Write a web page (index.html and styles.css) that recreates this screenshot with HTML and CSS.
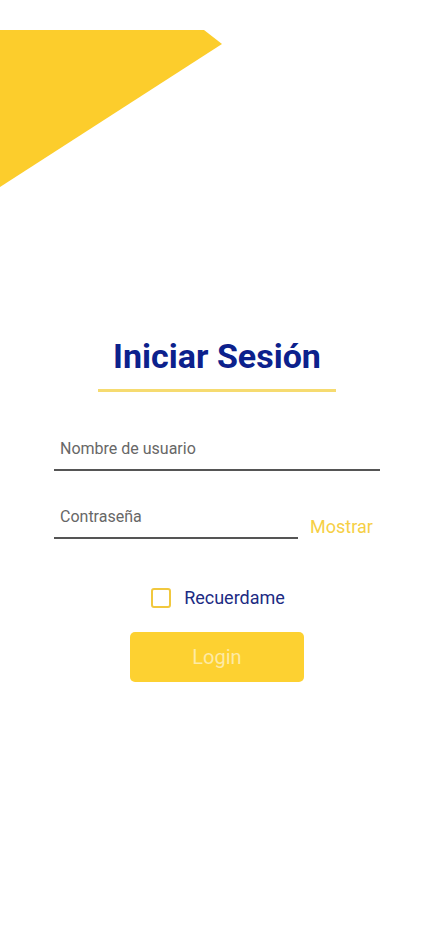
FILE: index.html
```html
<!DOCTYPE html>
<html lang="es">
<head>
<meta charset="UTF-8" />
<meta name="viewport" content="width=device-width, initial-scale=1" />
<title>Iniciar Sesión</title>
<link rel="stylesheet" href="styles.css">
</head>
<body>

<svg class="corner" width="222" height="158" viewBox="0 0 222 158" aria-hidden="true">
  <polygon points="0,0 204,0 222,14 0,157" fill="#fccd2c" />
</svg>

<main class="login">
  <h1 class="login-title">Iniciar Sesión</h1>

  <form class="login-form" onsubmit="return false;">
    <input type="text" class="field" placeholder="Nombre de usuario" />
    <div class="pass-row">
      <input type="password" class="field field-pass" placeholder="Contraseña" />
      <a href="#" class="show-link">Mostrar</a>
    </div>

    <label class="remember">
      <span class="check"></span>
      <span class="remember-text">Recuerdame</span>
    </label>

    <button type="submit" class="login-btn">Login</button>
  </form>
</main>

</body>
</html>
```

FILE: styles.css
```css
body {
  margin: 0;
  background: #fff;
  font-family: Roboto, "Noto Sans", Arial, sans-serif;
}
.corner {
  display: block;
  margin-top: 30px;
}
.login {
  display: flex;
  flex-direction: column;
  align-items: center;
  padding: 0 58px 0 54px;
}
.login-title {
  margin: 148px 0 0;
  padding: 0 15px 12px;
  border-bottom: 3px solid #f6db70;
  color: #0c218c;
  font-size: 34px;
  line-height: 41px;
  font-weight: 700;
}
.login-form {
  width: 100%;
  display: flex;
  flex-direction: column;
  align-items: center;
  margin-top: 39px;
}
.field {
  width: 100%;
  box-sizing: border-box;
  height: 40px;
  margin: 0;
  padding: 7px 6px 11px;
  border: none;
  border-bottom: 2px solid #555;
  background: transparent;
  font-family: inherit;
  font-size: 16px;
  line-height: 20px;
  color: #333;
  outline: none;
}
.field::placeholder {
  color: #676767;
}
.pass-row {
  width: 100%;
  display: flex;
  align-items: flex-end;
  margin-top: 28px;
}
.field-pass {
  width: 244px;
}
.show-link {
  margin: 0 0 1px 12px;
  color: #f6cf45;
  font-size: 18px;
  line-height: 22px;
  text-decoration: none;
}
.remember {
  display: flex;
  align-items: center;
  gap: 13px;
  margin-top: 48px;
  margin-left: 2px;
  cursor: pointer;
}
.check {
  width: 20px;
  height: 20px;
  box-sizing: border-box;
  border: 2px solid #f1c83e;
  border-radius: 3px;
}
.remember-text {
  color: #1c2b83;
  font-size: 18px;
  line-height: 22px;
}
.login-btn {
  width: 174px;
  height: 50px;
  margin-top: 23px;
  border: none;
  border-radius: 5px;
  background: #fdd131;
  color: #fdeaa5;
  font-family: inherit;
  font-size: 20px;
  cursor: pointer;
}
```
